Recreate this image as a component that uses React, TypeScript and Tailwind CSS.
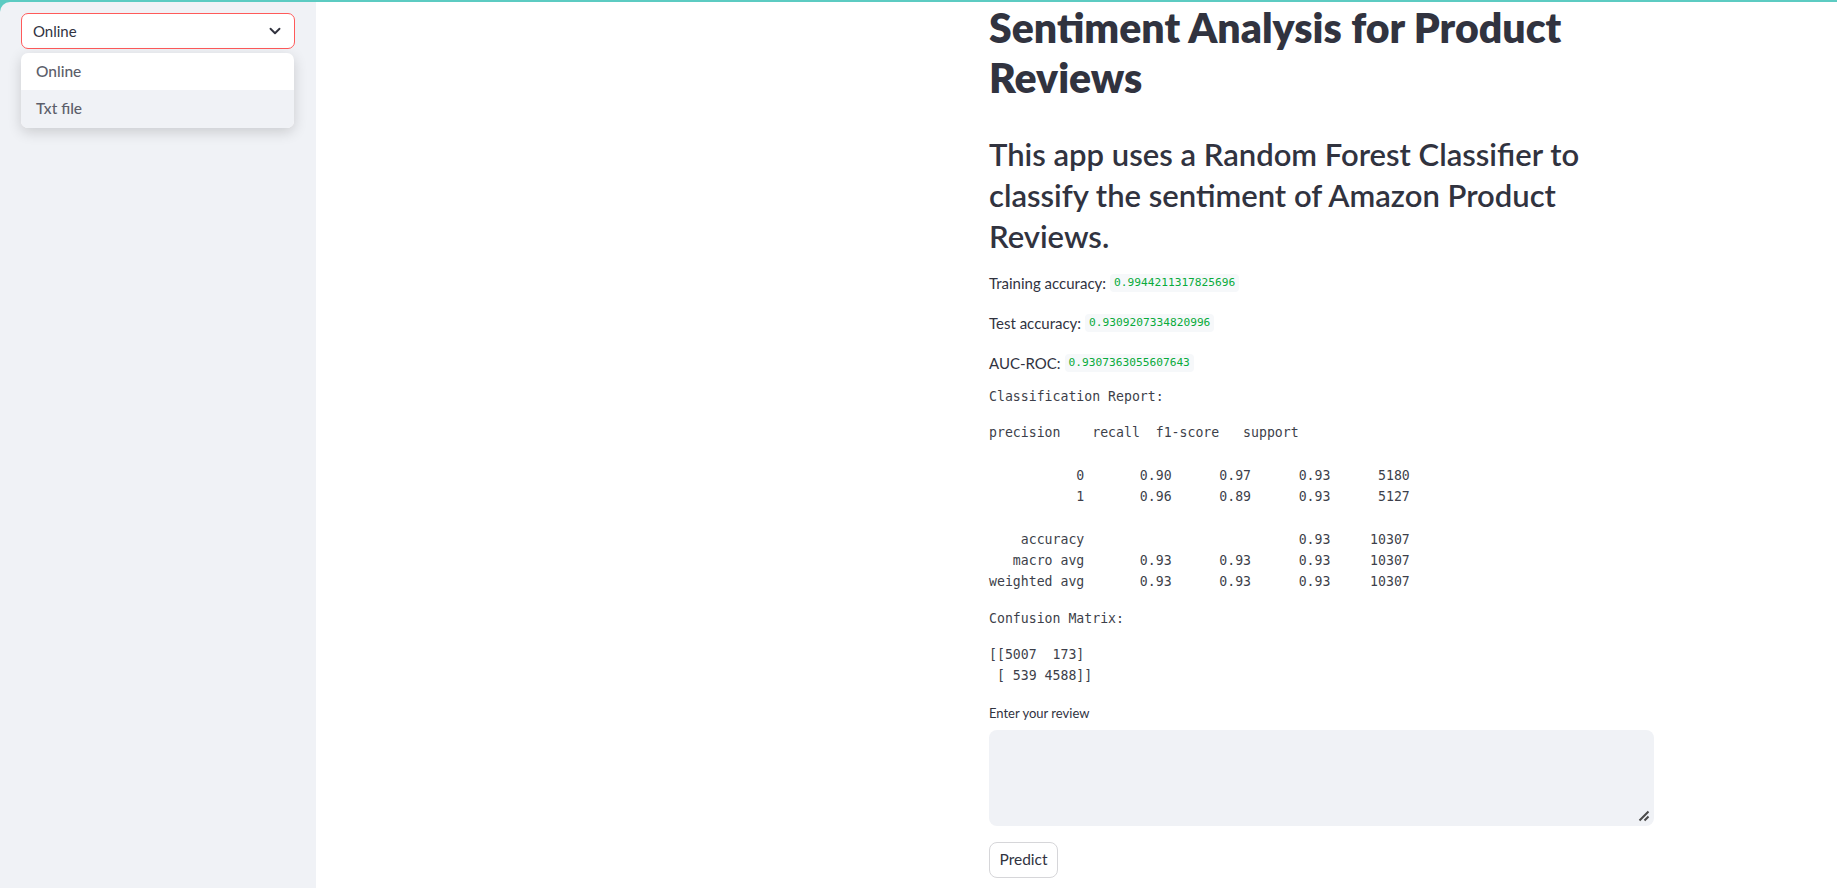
import { ChevronDown } from "lucide-react";

const report = `precision    recall  f1-score   support

           0       0.90      0.97      0.93      5180
           1       0.96      0.89      0.93      5127

    accuracy                           0.93     10307
   macro avg       0.93      0.93      0.93     10307
weighted avg       0.93      0.93      0.93     10307`;

const matrix = `[[5007  173]
 [ 539 4588]]`;

const metrics = [
  { label: "Training accuracy:", value: "0.9944211317825696", mt: "mt-[14px]" },
  { label: "Test accuracy:", value: "0.9309207334820996", mt: "mt-[16px]" },
  { label: "AUC-ROC:", value: "0.9307363055607643", mt: "mt-[16px]" },
];

function Sidebar() {
  return (
    <aside className="w-[316px] shrink-0 bg-[#5ccbc2]">
      <div className="relative h-full rounded-tl-[10px] bg-[#f0f2f6] px-[21px] pt-[11px]">
        <div className="flex h-[36px] items-center justify-between rounded-[7px] border border-[#ff5a5a] bg-white pl-[11px] pr-[10px] text-[15px] text-[#31333f]">
          <span>Online</span>
          <ChevronDown size={18} strokeWidth={2.5} className="text-[#31333f]" />
        </div>
        <div className="absolute left-[21px] top-[51px] w-[273px] overflow-hidden rounded-[7px] bg-white text-[15.5px] font-medium text-[#5c5e6a] shadow-[0_4px_14px_rgba(0,0,0,0.16)]">
          <div className="flex h-[37px] items-center pl-[15px]">Online</div>
          <div className="flex h-[38px] items-center bg-[#f0f2f6] pl-[15px]">Txt file</div>
        </div>
      </div>
    </aside>
  );
}

export default function App() {
  return (
    <div className="flex h-[888px] w-full flex-col overflow-hidden bg-white font-['Lato',sans-serif] text-[#31333f]">
      <div className="h-[2px] shrink-0 bg-[#5ccbc2]" />
      <div className="flex min-h-0 flex-1">
        <Sidebar />
        <main className="flex-1 pl-[673px]">
          <div className="flex w-[665px] flex-col">
            <h1 className="mt-px text-[41px] font-extrabold leading-[50px]">
              Sentiment Analysis for Product Reviews
            </h1>
            <h2 className="mt-[31px] text-[31px] font-semibold leading-[41px]">
              This app uses a Random Forest Classifier to classify the sentiment of Amazon Product Reviews.
            </h2>
            {metrics.map((m) => (
              <div key={m.label} className={`${m.mt} flex h-[24px] items-center text-[15px]`}>
                <span>{m.label}</span>
                <code className="ml-[4px] rounded-[4px] bg-[#f6f8fa] px-[4px] py-[1px] font-['DejaVu_Sans_Mono',monospace] text-[11.2px] text-[#09ab3b]">
                  {m.value}
                </code>
              </div>
            ))}
            <pre className="mt-[11px] font-['DejaVu_Sans_Mono',monospace] text-[13.2px] leading-[21.3px] text-[#3d3f4a]">
              Classification Report:
            </pre>
            <pre className="mt-[15px] font-['DejaVu_Sans_Mono',monospace] text-[13.2px] leading-[21.3px] text-[#3d3f4a]">
              {report}
            </pre>
            <pre className="mt-[15px] font-['DejaVu_Sans_Mono',monospace] text-[13.2px] leading-[21.3px] text-[#3d3f4a]">
              Confusion Matrix:
            </pre>
            <pre className="mt-[15px] font-['DejaVu_Sans_Mono',monospace] text-[13.2px] leading-[21.3px] text-[#3d3f4a]">
              {matrix}
            </pre>
            <label className="mt-[17px] text-[13px] leading-[18px]">Enter your review</label>
            <div className="relative mt-[8px] h-[96px] rounded-[8px] bg-[#f0f2f6]">
              <svg className="absolute bottom-[3px] right-[3px]" width="16" height="16" viewBox="0 0 16 16">
                <path d="M13.5 4.5 L4.5 13.5 M13.5 9.5 L9.5 13.5" stroke="#4a4a4a" strokeWidth="2" strokeLinecap="butt" />
              </svg>
            </div>
            <div className="mt-[16px]">
              <button className="h-[36px] w-[69px] rounded-[8px] border border-[#d6d6d9] bg-white text-[15.5px] text-[#31333f]">
                Predict
              </button>
            </div>
          </div>
        </main>
      </div>
    </div>
  );
}
